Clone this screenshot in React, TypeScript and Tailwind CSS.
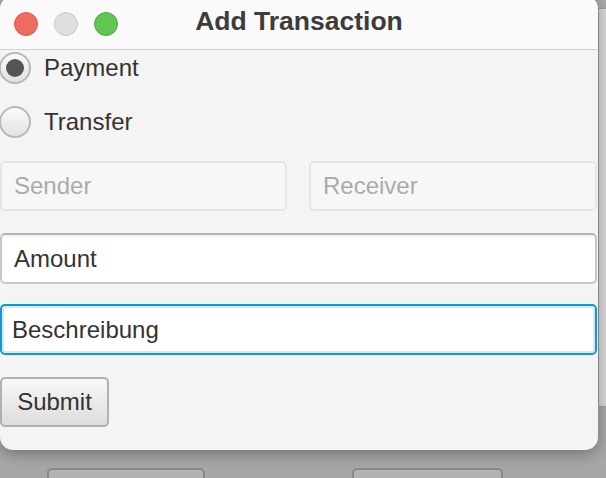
import React from "react";

function TrafficLight({ color }: { color: string }) {
  return <div className={`h-[24px] w-[24px] rounded-full border ${color}`} />;
}

function Radio({ label, checked }: { label: string; checked?: boolean }) {
  return (
    <div className="flex h-[32px] items-center">
      <div className="-ml-[1px] flex h-[32px] w-[32px] items-center justify-center rounded-full border-2 border-[#b8b8b8] bg-linear-to-b from-[#fbfbfb] to-[#e2e2e2]">
        {checked && <div className="h-[18px] w-[18px] rounded-full bg-[#555555]" />}
      </div>
      <span className="ml-[13px] text-[24px] leading-none text-[#333333]">{label}</span>
    </div>
  );
}

export default function App() {
  return (
    <div
      className="relative h-[478px] w-[606px] overflow-hidden bg-[#a6a6a6]"
      style={{ fontFamily: '"Liberation Sans", Arial, sans-serif' }}
    >
      {/* window behind, right edge */}
      <div className="absolute left-[598px] top-[8px] h-[399px] w-[12px] border-l border-t border-b border-[#9c9c9c] bg-[#d6d6d6]" />

      {/* buttons of the window behind */}
      <div className="absolute left-[47px] top-[468px] h-[24px] w-[158px] rounded-[5px] border-2 border-[#888888] bg-[#b2b2b2]" />
      <div className="absolute left-[352px] top-[468px] h-[24px] w-[151px] rounded-[5px] border-2 border-[#888888] bg-[#b2b2b2]" />

      {/* dialog window */}
      <div className="absolute left-0 top-[-4px] flex h-[454px] w-[598px] flex-col overflow-hidden rounded-[13px] bg-[#f4f4f4] shadow-[0_4px_14px_rgba(0,0,0,0.3)]">
        {/* title bar */}
        <div className="relative flex h-[54px] shrink-0 items-center border-b border-[#d0d0d0] bg-[#fafafa] pt-[3px]">
          <div className="flex gap-[16px] pl-[14px]">
            <TrafficLight color="border-[#dc5a4f] bg-[#ee6b60]" />
            <TrafficLight color="border-[#c9c9c9] bg-[#dfdfdf]" />
            <TrafficLight color="border-[#4fa844] bg-[#61c554]" />
          </div>
          <div className="absolute inset-x-0 top-[8px] text-center text-[26.5px] font-bold leading-[34px] text-[#3c3c3c]">
            Add Transaction
          </div>
        </div>

        {/* form */}
        <div className="flex flex-col pr-[1px] pt-[2px]">
          <Radio label="Payment" checked />
          <div className="mt-[22px]">
            <Radio label="Transfer" />
          </div>

          <div className="mt-[23px] flex gap-[22px]">
            <div className="flex h-[50px] w-[287px] items-center rounded-[5px] border-2 border-[#e6e6e6] bg-[#f7f7f7] px-[12px] text-[24px] text-[#ababab]">
              Sender
            </div>
            <div className="flex h-[50px] flex-1 items-center rounded-[5px] border-2 border-[#e6e6e6] bg-[#f7f7f7] px-[12px] text-[24px] text-[#ababab]">
              Receiver
            </div>
          </div>

          <div className="mt-[22px] flex h-[51px] items-center rounded-[5px] border-2 border-[#c8c8c8] border-t-[#b4b4b4] bg-white px-[12px] text-[24px] text-[#333333] shadow-[inset_0_2px_2px_rgba(0,0,0,0.06)]">
            Amount
          </div>

          <div className="mt-[20px] flex h-[51px] items-center rounded-[5px] border-2 border-[#0d9ad6] bg-white px-[10px] text-[24px] text-[#333333] shadow-[inset_0_0_0_2px_#d2ebf7]">
            Beschreibung
          </div>

          <div className="mt-[22px] flex">
            <div className="flex h-[50px] w-[109px] items-center justify-center rounded-[5px] border-2 border-[#b0b0b0] bg-linear-to-b from-[#f8f8f8] to-[#dddddd] text-[24px] text-[#333333]">
              Submit
            </div>
          </div>
        </div>
      </div>
    </div>
  );
}
